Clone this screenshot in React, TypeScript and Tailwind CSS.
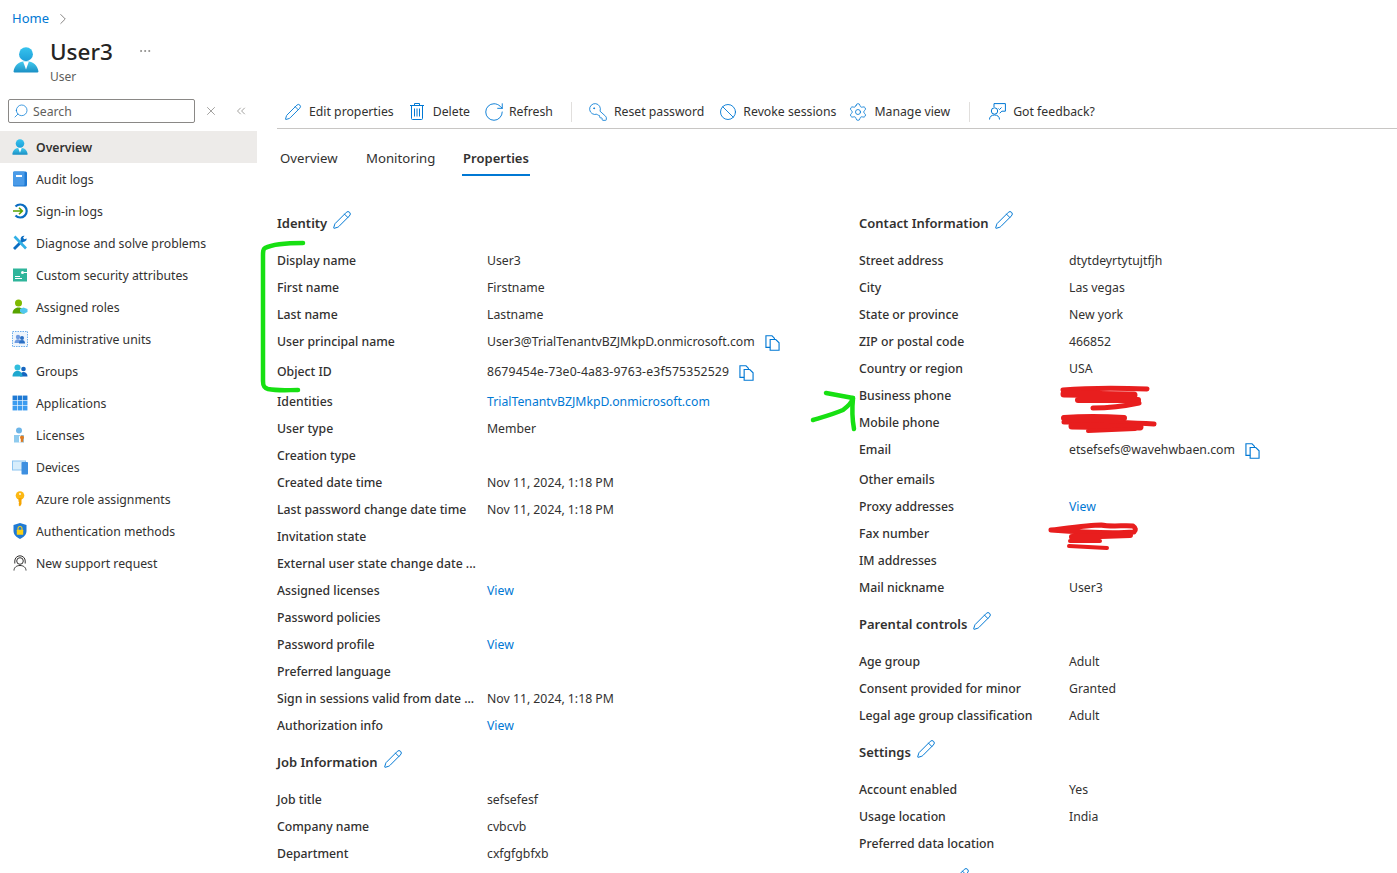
import { Ban, ChevronRight, ChevronsLeft, Ellipsis, KeyRound, Pencil, RotateCw, Search, Settings, X } from 'lucide-react';
import type { ReactNode } from 'react';

function UserIcon({ className }: { className?: string }) {
  return (
    <svg viewBox="0 0 18 18" className={className}>
      <defs>
        <linearGradient id="userHead" x1="0" y1="0" x2="0" y2="1">
          <stop offset="0" stopColor="#36c3ee" />
          <stop offset="1" stopColor="#1f9fd8" />
        </linearGradient>
        <linearGradient id="userBody" x1="0" y1="0" x2="0" y2="1">
          <stop offset="0" stopColor="#45cdf0" />
          <stop offset="1" stopColor="#1a8fc4" />
        </linearGradient>
      </defs>
      <circle cx="9" cy="5" r="4.800" fill="url(#userHead)" />
      <path d="M1 17.600c-.4 0-.7-.3-.6-.8C1 13 3.500 9.800 9 9.800s8 3.200 8.600 7c.1.500-.2.800-.6.800z" fill="url(#userBody)" />
      <path d="M7 10 9 15.500 11 10z" fill="#fff" />
    </svg>
  );
}

function CopyIcon() {
  return (
    <svg viewBox="0 0 16 17" className="h-4 w-[15px]" fill="#fff" stroke="#0078d4" strokeWidth="1.200">
      <path d="M1 .8h6.500L10 3.300v9.900H1z" />
      <path d="M5.500 4.800h6L15 8.300v7.900H5.500z" />
    </svg>
  );
}

function TrashIcon() {
  return (
    <svg viewBox="0 0 14 17" className="h-[17px] w-[14px]" fill="none" stroke="#0078d4" strokeWidth="1">
      <path d="M0 2.500h14M4.500 2.500V.5h5v2M1.500 2.500v13a1 1 0 0 0 1 1h9a1 1 0 0 0 1-1v-13" />
      <path d="M4.500 5.500v8M7 5.500v8M9.500 5.500v8" />
    </svg>
  );
}

function FeedbackIcon() {
  return (
    <svg viewBox="0 0 17 17" className="h-[17px] w-[17px]" fill="none" stroke="#0078d4" strokeWidth="1">
      <path d="M5 4V.6h11.400v7.600h-3.500l-2.200 2" />
      <circle cx="5.500" cy="8" r="3.200" />
      <path d="M.5 16.500c0-2.800 2-4.500 5-4.500s5 1.700 5 4.500" />
      <path d="m9.500 5.500 1 1 2-2" />
    </svg>
  );
}

const navItems: { label: string; icon: ReactNode }[] = [
  { label: 'Overview', icon: <UserIcon className="h-4 w-4" /> },
  {
    label: 'Audit logs',
    icon: (
      <svg viewBox="0 0 16 16" className="h-4 w-4">
        <rect x="1" y="0.500" width="14" height="15" rx="1.500" fill="#1f7ad4" />
        <rect x="1" y="0.500" width="11.500" height="14" rx="1" fill="#4a9be8" />
        <rect x="4" y="4" width="6" height="2" fill="#fff" />
      </svg>
    ),
  },
  {
    label: 'Sign-in logs',
    icon: (
      <svg viewBox="0 0 16 16" className="h-4 w-4" fill="none">
        <path d="M3.500 3.500a6.500 6.500 0 1 1 0 9" stroke="#0a6dc2" strokeWidth="2.200" />
        <path d="M1 8h9M7 4.800 10.300 8 7 11.200" stroke="#57a300" strokeWidth="1.600" />
      </svg>
    ),
  },
  {
    label: 'Diagnose and solve problems',
    icon: (
      <svg viewBox="0 0 16 16" className="h-4 w-4" fill="none">
        <path d="M2 14 11.500 4.500" stroke="#0a6dc2" strokeWidth="2.800" />
        <path d="M14.800 3.500a3.500 3.500 0 0 1-5 3L8.700 5a3.500 3.500 0 0 1 3.800-4.300l-1.500 2 1.300 1.600z" fill="#0a6dc2" />
        <path d="M2.500 1.500 14 13.500" stroke="#32b0e6" strokeWidth="2.600" />
      </svg>
    ),
  },
  {
    label: 'Custom security attributes',
    icon: (
      <svg viewBox="0 0 16 16" className="h-4 w-4">
        <path d="M1 1.500h14v13H1z" fill="#2fb59b" />
        <path d="M3 9.500h5M3 11.500h7" stroke="#fff" strokeWidth="1" />
        <circle cx="10.500" cy="5.500" r="1.500" fill="#fff" />
        <path d="M12 5.500h3" stroke="#fff" strokeWidth="1" />
      </svg>
    ),
  },
  {
    label: 'Assigned roles',
    icon: (
      <svg viewBox="0 0 16 16" className="h-4 w-4">
        <circle cx="6.500" cy="4" r="3.500" fill="#7fba00" />
        <path d="M0.500 14.500c0-3.500 2.500-6 6-6s6 2.500 6 6z" fill="#57a300" />
        <path d="m11.500 8.500 4 1.500v3l-4 2-3.500-2v-3z" fill="#50c7ee" />
      </svg>
    ),
  },
  {
    label: 'Administrative units',
    icon: (
      <svg viewBox="0 0 16 16" className="h-4 w-4">
        <rect x="0.500" y="0.500" width="15" height="15" fill="#eef5fc" stroke="#4a9be8" strokeWidth="0.800" strokeDasharray="1.500 1" />
        <circle cx="6" cy="6" r="2.200" fill="#6f9be0" />
        <path d="M2.500 12c0-2.500 1.500-3.800 3.500-3.800s3.500 1.300 3.500 3.800z" fill="#6f9be0" />
        <circle cx="10" cy="7" r="2" fill="#2a6fc4" />
        <path d="M7 12.500c0-2.400 1.200-3.500 3-3.500s3 1.100 3 3.500z" fill="#2a6fc4" />
      </svg>
    ),
  },
  {
    label: 'Groups',
    icon: (
      <svg viewBox="0 0 16 16" className="h-4 w-4">
        <circle cx="11.500" cy="6" r="2.300" fill="#1565c0" />
        <path d="M8 13.500c0-3 1.500-4.500 3.500-4.500s4 1.500 4 4.500z" fill="#1565c0" />
        <circle cx="5.500" cy="4.500" r="3" fill="#32bedd" />
        <path d="M0.500 13.500c0-3.500 2-5.500 5-5.500s5 2 5 5.500z" fill="#1fa8cf" />
      </svg>
    ),
  },
  {
    label: 'Applications',
    icon: (
      <svg viewBox="0 0 14 14" className="h-4 w-4">
        {[0.500, 5, 9.500].flatMap((y) =>
          [0.500, 5, 9.500].map((x) => <rect key={`${x}-${y}`} x={x} y={y} width="4" height="4" fill={y < 1 ? '#1f7ad4' : '#3b9cf0'} />),
        )}
      </svg>
    ),
  },
  {
    label: 'Licenses',
    icon: (
      <svg viewBox="0 0 16 16" className="h-4 w-4">
        <circle cx="7" cy="3.500" r="3" fill="#6db5e8" />
        <path d="M2 8h10v7.500H2z" fill="#8fcbee" />
        <path d="M7 9.500 9 8v7.500H7z" fill="#fff" />
        <circle cx="10" cy="10.500" r="2" fill="#e07a1f" />
        <path d="M8.800 12h2.400v3.500l-1.200-1-1.200 1z" fill="#e07a1f" />
      </svg>
    ),
  },
  {
    label: 'Devices',
    icon: (
      <svg viewBox="0 0 16 16" className="h-4 w-4">
        <rect x="0" y="1.500" width="14" height="10" fill="#8cc4f0" />
        <rect x="1" y="2.500" width="12" height="8" fill="#d7edfb" />
        <rect x="9.500" y="3" width="6.500" height="12.500" rx="0.800" fill="#3d8fe0" />
      </svg>
    ),
  },
  {
    label: 'Azure role assignments',
    icon: (
      <svg viewBox="0 0 16 16" className="h-4 w-4">
        <circle cx="8" cy="4.500" r="4.300" fill="#fcb813" />
        <path d="M6.500 7h3v6l-1.500 2.500-1.500-1.500.7-1-.7-.8.7-1-.7-.8z" fill="#f5a400" />
        <circle cx="8" cy="3" r="0.900" fill="#fff" />
      </svg>
    ),
  },
  {
    label: 'Authentication methods',
    icon: (
      <svg viewBox="0 0 16 16" className="h-4 w-4">
        <path d="M8 0 14.500 2v6c0 3.500-3 6.500-6.500 8-3.500-1.500-6.500-4.500-6.500-8V2z" fill="#1f7ad4" />
        <rect x="4.800" y="6.800" width="6.400" height="5" rx="0.500" fill="#fcd116" />
        <path d="M6 7V5.500a2 2 0 0 1 4 0V7" fill="none" stroke="#fcd116" strokeWidth="1.100" />
      </svg>
    ),
  },
  {
    label: 'New support request',
    icon: (
      <svg viewBox="0 0 16 16" className="h-4 w-4" fill="none" stroke="#323130" strokeWidth="1">
        <circle cx="8" cy="6" r="3.300" />
        <path d="M2.800 8.500V6a5.200 5.200 0 0 1 10.400 0v2.500" />
        <path d="M2 15.500c0-3 2.500-5 6-5s6 2 6 5" />
      </svg>
    ),
  },
];

type Field = { label: string; value?: string; link?: boolean; copy?: boolean; wide?: boolean };
type Section = { title: string; fields: Field[] };

const leftSections: Section[] = [
  {
    title: 'Identity',
    fields: [
      { label: 'Display name', value: 'User3' },
      { label: 'First name', value: 'Firstname' },
      { label: 'Last name', value: 'Lastname' },
      { label: 'User principal name', value: 'User3@TrialTenantvBZJMkpD.onmicrosoft.com', copy: true },
      { label: 'Object ID', value: '8679454e-73e0-4a83-9763-e3f575352529', copy: true, wide: true },
      { label: 'Identities', value: 'TrialTenantvBZJMkpD.onmicrosoft.com', link: true },
      { label: 'User type', value: 'Member' },
      { label: 'Creation type' },
      { label: 'Created date time', value: 'Nov 11, 2024, 1:18 PM' },
      { label: 'Last password change date time', value: 'Nov 11, 2024, 1:18 PM' },
      { label: 'Invitation state' },
      { label: 'External user state change date ...' },
      { label: 'Assigned licenses', value: 'View', link: true },
      { label: 'Password policies' },
      { label: 'Password profile', value: 'View', link: true },
      { label: 'Preferred language' },
      { label: 'Sign in sessions valid from date ...', value: 'Nov 11, 2024, 1:18 PM' },
      { label: 'Authorization info', value: 'View', link: true },
    ],
  },
  {
    title: 'Job Information',
    fields: [
      { label: 'Job title', value: 'sefsefesf' },
      { label: 'Company name', value: 'cvbcvb' },
      { label: 'Department', value: 'cxfgfgbfxb' },
    ],
  },
];

const rightSections: Section[] = [
  {
    title: 'Contact Information',
    fields: [
      { label: 'Street address', value: 'dtytdeyrtytujtfjh' },
      { label: 'City', value: 'Las vegas' },
      { label: 'State or province', value: 'New york' },
      { label: 'ZIP or postal code', value: '466852' },
      { label: 'Country or region', value: 'USA' },
      { label: 'Business phone' },
      { label: 'Mobile phone' },
      { label: 'Email', value: 'etsefsefs@wavehwbaen.com', copy: true },
      { label: 'Other emails' },
      { label: 'Proxy addresses', value: 'View', link: true },
      { label: 'Fax number' },
      { label: 'IM addresses' },
      { label: 'Mail nickname', value: 'User3' },
    ],
  },
  {
    title: 'Parental controls',
    fields: [
      { label: 'Age group', value: 'Adult' },
      { label: 'Consent provided for minor', value: 'Granted' },
      { label: 'Legal age group classification', value: 'Adult' },
    ],
  },
  {
    title: 'Settings',
    fields: [
      { label: 'Account enabled', value: 'Yes' },
      { label: 'Usage location', value: 'India' },
      { label: 'Preferred data location' },
    ],
  },
];

function ToolbarItem({ icon, label, className }: { icon: ReactNode; label: string; className: string }) {
  return (
    <div className={`flex items-center ${className}`}>
      {icon}
      <span className="translate-y-px">{label}</span>
    </div>
  );
}

function PropertySection({ section }: { section: Section }) {
  return (
    <div>
      <div className="flex h-[47px] items-center gap-[5px]">
        <span className="-translate-y-px text-[13px] font-semibold text-[#323130]">{section.title}</span>
        <Pencil className="h-5 w-5 -translate-y-[5px] text-[#0078d4]" strokeWidth={1.200} />
      </div>
      {section.fields.map((f) => (
        <div key={f.label} className={`grid grid-cols-[210px_1fr] ${f.copy ? 'h-[30px]' : 'h-[27px]'}`}>
          <div className="flex h-[27px] items-center font-medium whitespace-nowrap text-[#323130]">{f.label}</div>
          <div className={`flex h-[27px] items-center gap-2.5 whitespace-nowrap ${f.link ? 'text-[#0078d4]' : 'text-[#323130]'} ${f.wide ? 'tracking-[0.15px]' : ''}`}>
            {f.value}
            {f.copy && <CopyIcon />}
          </div>
        </div>
      ))}
    </div>
  );
}

export default function App() {
  return (
    <div className="relative h-[873px] overflow-hidden bg-white text-[12.250px] text-[#323130] [font-family:'Noto_Sans',sans-serif]">
      {/* Заголовок */}
      <div className="h-[95px] pl-3">
        <div className="flex h-[37px] items-center gap-[5px] text-[13px] text-[#0078d4]">
          Home
          <ChevronRight className="h-[18px] w-[18px] text-[#605e5c]" strokeWidth={1} />
        </div>
        <div className="flex items-start">
          <UserIcon className="mt-[9px] ml-px h-7 w-[26px]" />
          <div className="ml-[11px]">
            <div className="text-[22.500px] leading-[29px] font-medium text-[#252423]">User3</div>
            <div className="mt-[3px] text-xs text-[#605e5c]">User</div>
          </div>
          <Ellipsis className="mt-[7px] ml-[25px] h-[14px] w-[14px] text-[#605e5c]" strokeWidth={1} />
        </div>
      </div>

      <div className="flex">
        {/* Боковое меню */}
        <div className="w-[257px] shrink-0">
          <div className="flex h-9 items-start pt-1 pl-2">
            <div className="flex h-6 w-[187px] items-center gap-1 rounded-[2px] border border-[#8a8886] pl-1 text-[#605e5c]">
              <Search className="h-4 w-4 -scale-x-100 text-[#0078d4]" strokeWidth={1.100} />
              <span className="translate-y-px">Search</span>
            </div>
            <X className="mt-[5px] ml-[9px] h-3.5 w-3.5 text-[#605e5c]" strokeWidth={1} />
            <ChevronsLeft className="mt-[5px] ml-4 h-3.5 w-3.5 text-[#605e5c]" strokeWidth={1} />
          </div>
          {navItems.map((item, i) => (
            <div key={item.label} className={`flex h-8 items-center gap-2 pl-3 ${i === 0 ? 'bg-[#edebe9] font-semibold' : ''}`}>
              {item.icon}
              <span className="translate-y-px whitespace-nowrap">{item.label}</span>
            </div>
          ))}
        </div>

        {/* Основная часть */}
        <div className="min-w-0 flex-1 pl-5">
          <div className="flex h-[34px] items-center border-b border-[#c8c6c4] pl-[7px]">
            <ToolbarItem icon={<Pencil className="h-[18px] w-[18px] text-[#0078d4]" strokeWidth={1.200} />} label="Edit properties" className="gap-[7px]" />
            <ToolbarItem icon={<TrashIcon />} label="Delete" className="ml-4 gap-[9px]" />
            <ToolbarItem icon={<RotateCw className="h-[22px] w-[22px] text-[#0078d4]" strokeWidth={1} />} label="Refresh" className="ml-[13px] gap-1" />
            <div className="ml-[18px] h-5 w-px bg-[#e1dfdd]" />
            <ToolbarItem icon={<KeyRound className="h-5 w-5 -scale-x-100 text-[#0078d4]" strokeWidth={1} />} label="Reset password" className="ml-4 gap-1.5" />
            <ToolbarItem icon={<Ban className="h-[18px] w-[18px] text-[#0078d4]" strokeWidth={1.200} />} label="Revoke sessions" className="ml-[15px] gap-1.5" />
            <ToolbarItem icon={<Settings className="h-5 w-5 text-[#0078d4]" strokeWidth={1} />} label="Manage view" className="ml-3 gap-1.5" />
            <div className="ml-[19px] h-5 w-px bg-[#e1dfdd]" />
            <ToolbarItem icon={<FeedbackIcon />} label="Got feedback?" className="ml-[19px] gap-[7px]" />
          </div>

          <div className="flex h-[47px] pl-[3px] text-[13.200px]">
            <div className="flex w-[86px] items-center pt-3 text-[#323130]">Overview</div>
            <div className="flex w-[96px] items-center pt-3 text-[#323130]">Monitoring</div>
            <div className="flex w-[68px] items-center justify-center border-b-2 border-[#0078d4] pt-3.5 text-[13px] font-semibold">Properties</div>
          </div>

          <div className="mt-[25px] grid grid-cols-[582px_1fr]">
            <div>
              {leftSections.map((s) => (
                <PropertySection key={s.title} section={s} />
              ))}
            </div>
            <div>
              {rightSections.map((s) => (
                <PropertySection key={s.title} section={s} />
              ))}
              {/* следующий раздел обрезан краем экрана, виден только карандаш */}
              <div className="flex h-[47px] items-center pl-[91px]">
                <Pencil className="h-5 w-5 -translate-y-[5px] text-[#0078d4]" strokeWidth={1.200} />
              </div>
            </div>
          </div>
        </div>
      </div>

      {/* Пометки поверх скриншота */}
      <svg className="pointer-events-none absolute inset-0" width="1397" height="873" fill="none" strokeLinecap="round" strokeLinejoin="round">
        <g stroke="#17e012" strokeWidth="4.500">
          <path d="M303 243c-14 0-30 1-38 5-2 1-2 4-2 8l0 125c0 5 1 7 5 8 10 2 20 1 30 1" />
          <path d="M826 393l27 5c-1 4-6 9-10 12-9 4-20 7-30 10" />
          <path d="M853 398c-1 10-1 20 1 31" />
        </g>
        <g stroke="#e81e1e">
          <path d="M1063 390c25-2 55-2 84-1" strokeWidth="5" />
          <path d="M1064 394l70 1" strokeWidth="7" />
          <path d="M1078 400l60 0" strokeWidth="6" />
          <path d="M1093 408c15 0 32-2 46-5" strokeWidth="5" />
          <path d="M1064 418c25-2 45-1 60 0" strokeWidth="6" />
          <path d="M1064 422c30 0 60 0 90 2" strokeWidth="5" />
          <path d="M1072 426l68 1" strokeWidth="7" />
          <path d="M1088 431l47-2" strokeWidth="4" />
          <path d="M1051 530c25-3 40-5 50-5 10 2 25 0 32 1 3 2 3 4 1 6-25 2-55 0-83-2" strokeWidth="5" />
          <path d="M1072 537l58-2" strokeWidth="6" />
          <path d="M1069 546l38 2" strokeWidth="4" />
          <path d="M1070 541l30 0" strokeWidth="4" />
        </g>
      </svg>
    </div>
  );
}
